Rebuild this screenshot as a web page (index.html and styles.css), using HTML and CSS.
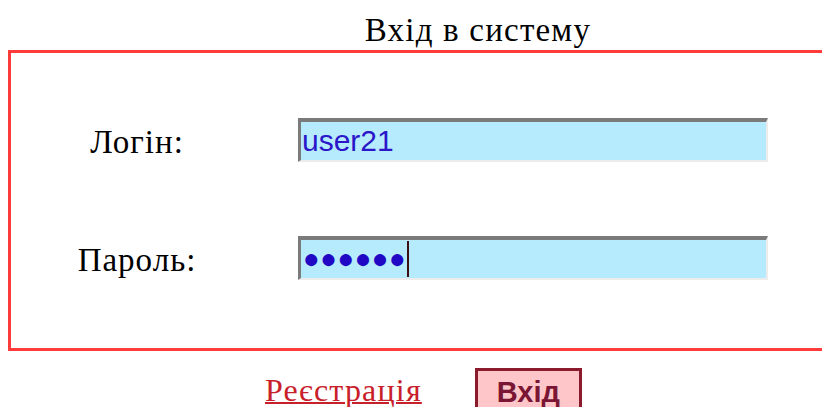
FILE: index.html
```html
<!DOCTYPE html>
<html lang="uk">
<head>
<meta charset="utf-8">
<title>Вхід в систему</title>
<link rel="stylesheet" href="styles.css">
</head>
<body>
<div class="page">
  <h1 class="title">Вхід в систему</h1>
  <form class="login-box">
    <div class="row">
      <label class="label" for="login">Логін:</label>
      <div class="field" id="login"><span class="value">user21</span></div>
    </div>
    <div class="row">
      <label class="label" for="pass">Пароль:</label>
      <div class="field" id="pass"><span class="dots">●●●●●●</span><span class="caret"></span></div>
    </div>
  </form>
  <div class="actions">
    <a class="register" href="#">Реєстрація</a>
    <button class="submit" type="button">Вхід</button>
  </div>
</div>
</body>
</html>
```
FILE: styles.css
```css
html, body {
  margin: 0;
  padding: 0;
  background: #fff;
  overflow: hidden;
}

.page {
  width: 940px;
  padding: 0 0 0 8px;
  font-family: "Liberation Serif", "Times New Roman", serif;
  color: #000;
}

.title {
  margin: 0;
  height: 50px;
  padding-top: 10px;
  box-sizing: border-box;
  font-weight: normal;
  font-size: 33px;
  line-height: 40px;
  text-align: center;
  letter-spacing: 1.2px;
}

.login-box {
  margin: 0;
  height: 301px;
  box-sizing: border-box;
  border: 3px solid #ff3b3b;
  border-right: none;
  padding-top: 65px;
  display: flex;
  flex-direction: column;
  gap: 74px;
}

.row {
  display: flex;
  align-items: center;
  height: 44px;
}

.label {
  width: 252px;
  text-align: center;
  font-size: 33px;
  letter-spacing: 1px;
  padding-top: 4px;
}

.field {
  margin-left: 35px;
  width: 470px;
  height: 44px;
  box-sizing: border-box;
  background: #b5ebfc;
  border-style: solid;
  border-width: 4px 2px 2px 3px;
  border-color: #7b7b7b #ececec #ececec #7b7b7b;
  display: flex;
  align-items: center;
  padding-left: 1px;
}

.value {
  font-family: "Liberation Sans", Arial, sans-serif;
  font-size: 30px;
  color: #2b16c9;
  letter-spacing: 0;
}

.dots {
  font-family: "Liberation Sans", Arial, sans-serif;
  font-size: 28px;
  color: #2008c4;
  letter-spacing: 0.3px;
  margin-left: 1px;
}

.caret {
  width: 2px;
  height: 36px;
  margin-left: 1px;
  background: #3a1010;
}

.actions {
  display: flex;
  align-items: flex-start;
  padding-left: 257px;
  gap: 53px;
  margin-top: 17px;
}

.register {
  font-size: 32px;
  line-height: 36px;
  letter-spacing: 1.2px;
  color: #c8202a;
  text-decoration: underline;
  text-decoration-thickness: 2px;
  margin-top: 4px;
}

.submit {
  font-family: "Liberation Sans", Arial, sans-serif;
  font-weight: bold;
  font-size: 29px;
  color: #7a1633;
  background: #fec6c8;
  border: 3px solid #8a1a2c;
  width: 107px;
  height: 48px;
  padding: 0;
}
```
